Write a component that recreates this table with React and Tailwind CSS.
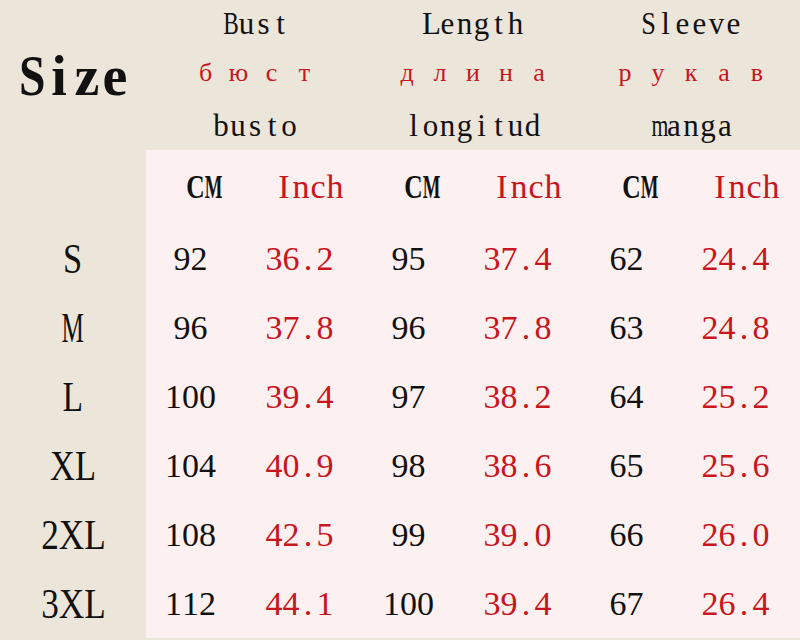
const RED = 'text-[#c8161e]';

// wide glyphs squeezed into a half-width cell, like the SimSun original
const SQUEEZE = {
  M: 'scale-x-[0.55]',
  C: 'scale-x-[0.75]',
  B: 'scale-x-[0.75]',
  S: 'scale-x-[0.85]',
  m: 'scale-x-[0.7]',
};

// size labels are squeezed as a whole word
const LABEL_SQUEEZE = {
  S: 'scale-x-[0.82]',
  M: 'scale-x-[0.6]',
  L: 'scale-x-[0.8]',
  XL: 'scale-x-[0.82]',
  '2XL': 'scale-x-[0.84]',
  '3XL': 'scale-x-[0.84]',
};

function Mono({ text, cell = 'w-[0.5em]', className = '' }) {
  return (
    <span className={`inline-block whitespace-nowrap ${className}`}>
      {text.split('').map((ch, i) => (
        <span key={i} className={`inline-block text-center ${cell} ${SQUEEZE[ch] || ''}`}>
          {ch}
        </span>
      ))}
    </span>
  );
}

function Spaced({ text }) {
  return (
    <span className={`inline-block whitespace-nowrap text-[26px] leading-[26px] ${RED}`}>
      {text.split('').map((ch, i) => (
        <span key={i} className="inline-block w-[33px] text-center">{ch}</span>
      ))}
    </span>
  );
}

const GROUPS = [
  { en: 'Bust', ru: 'бюст', es: 'busto' },
  { en: 'Length', ru: 'длина', es: 'longitud' },
  { en: 'Sleeve', ru: 'рукав', es: 'manga' },
];

const ROWS = [
  { size: 'S', vals: ['92', '36.2', '95', '37.4', '62', '24.4'] },
  { size: 'M', vals: ['96', '37.8', '96', '37.8', '63', '24.8'] },
  { size: 'L', vals: ['100', '39.4', '97', '38.2', '64', '25.2'] },
  { size: 'XL', vals: ['104', '40.9', '98', '38.6', '65', '25.6'] },
  { size: '2XL', vals: ['108', '42.5', '99', '39.0', '66', '26.0'] },
  { size: '3XL', vals: ['112', '44.1', '100', '39.4', '67', '26.4'] },
];

export default function App() {
  return (
    <div className="w-[800px] h-[640px] overflow-hidden bg-[#ece5d9] text-[#111] font-['Liberation_Serif','Noto_Sans_CJK_SC',serif]">
      {/* header block */}
      <div className="flex h-[150px]">
        <div className="w-[146px] flex justify-center pt-[48px]">
          <Mono text="Size" className="text-[56px] leading-none font-bold" />
        </div>
        {GROUPS.map((g) => (
          <div key={g.en} className="flex-1 flex flex-col items-center pt-[7px]">
            <div className="h-[34px] text-[31px] leading-[34px]">
              <Mono text={g.en} cell="w-[17px]" />
            </div>
            <div className="mt-[19px] h-[26px]">
              <Spaced text={g.ru} />
            </div>
            <div className="mt-[23px] h-[34px] text-[31px] leading-[34px]">
              <Mono text={g.es} cell="w-[17px]" />
            </div>
          </div>
        ))}
      </div>

      {/* table */}
      <div className="flex">
        <div className="w-[146px] flex flex-col">
          <div className="h-[74px]"></div>
          {ROWS.map((r) => (
            <div key={r.size} className="h-[69px] flex items-center justify-center text-[42px] leading-none">
              <span className={`inline-block whitespace-nowrap ${LABEL_SQUEEZE[r.size]}`}>{r.size}</span>
            </div>
          ))}
        </div>
        <div className="flex-1 bg-[#fdf0f0] grid grid-cols-6 grid-rows-[74px_repeat(6,69px)] text-[34px] leading-none">
          {['CM', 'Inch', 'CM', 'Inch', 'CM', 'Inch'].map((h, i) => (
            <div key={i} className={`flex items-center justify-center ${i % 2 ? RED : 'font-bold'}`}>
              <Mono text={h} />
            </div>
          ))}
          {ROWS.map((r) =>
            r.vals.map((v, i) => (
              <div key={r.size + i} className={`flex items-center justify-center pr-5 ${i % 2 ? RED : ''}`}>
                <Mono text={v} />
              </div>
            ))
          )}
        </div>
      </div>
    </div>
  );
}
